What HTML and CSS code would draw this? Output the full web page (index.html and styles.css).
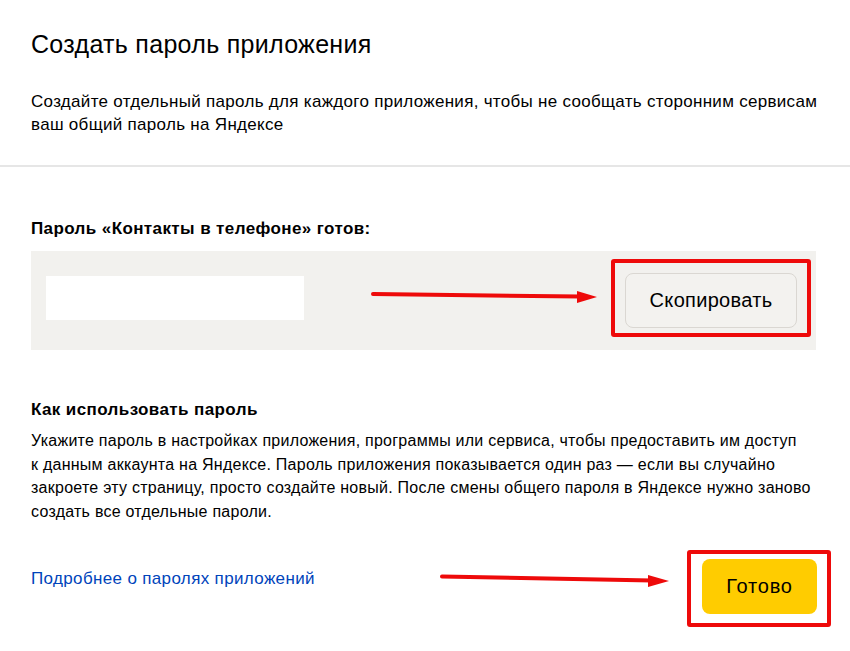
FILE: index.html
```html
<!DOCTYPE html>
<html lang="ru">
<head>
<meta charset="utf-8">
<title>Создать пароль приложения</title>
<link rel="stylesheet" href="styles.css">
</head>
<body>
<div class="page">
  <header class="head">
    <h1 class="title">Создать пароль приложения</h1>
    <p class="lead">Создайте отдельный пароль для каждого приложения, чтобы не сообщать сторонним сервисам<br>ваш общий пароль на Яндексе</p>
  </header>
  <section class="content">
    <h2 class="subtitle">Пароль «Контакты в телефоне» готов:</h2>
    <div class="pwbox">
      <div class="pwfield"></div>
      <button class="btn btn-copy" type="button">Скопировать</button>
    </div>
    <h2 class="subtitle how">Как использовать пароль</h2>
    <p class="info">Укажите пароль в настройках приложения, программы или сервиса, чтобы предоставить им доступ<br>к данным аккаунта на Яндексе. Пароль приложения показывается один раз — если вы случайно<br>закроете эту страницу, просто создайте новый. После смены общего пароля в Яндексе нужно заново<br>создать все отдельные пароли.</p>
    <div class="footer">
      <a class="more" href="#">Подробнее о паролях приложений</a>
      <button class="btn btn-done" type="button">Готово</button>
    </div>
  </section>
  <svg class="annot" width="850" height="651" viewBox="0 0 850 651" aria-hidden="true">
    <rect x="613" y="261" width="196" height="74" fill="none" stroke="#ee0a0a" stroke-width="4" rx="1"/>
    <rect x="689" y="552" width="140" height="73" fill="none" stroke="#ee0a0a" stroke-width="4" rx="1"/>
    <line x1="373" y1="294" x2="580" y2="296.6" stroke="#ee0a0a" stroke-width="4" stroke-linecap="round"/>
    <polygon points="577,291 597,297 577,303" fill="#ee0a0a"/>
    <line x1="442" y1="576.5" x2="652" y2="580.6" stroke="#ee0a0a" stroke-width="4" stroke-linecap="round"/>
    <polygon points="648,575 669,581 648,587" fill="#ee0a0a"/>
  </svg>
</div>
</body>
</html>
```
FILE: styles.css
```css
* { box-sizing: border-box; }
html, body { margin: 0; padding: 0; background: #fff; }
body {
  font-family: "Liberation Sans", Arial, sans-serif;
  color: #000;
  width: 850px;
  height: 651px;
  overflow: hidden;
}
.page { position: relative; width: 850px; height: 651px; }
.head {
  padding: 30px 34px 29px 31px;
  border-bottom: 2px solid #e6e6e6;
}
.title {
  margin: 0;
  font-size: 25px;
  line-height: 28px;
  font-weight: 400;
  letter-spacing: 0.3px;
}
.lead {
  margin: 32px 0 0;
  font-size: 17px;
  line-height: 23px;
  letter-spacing: 0.3px;
  white-space: nowrap;
}
.content { padding: 0 34px 0 31px; }
.subtitle {
  margin: 51px 0 11px;
  font-size: 17px;
  line-height: 22px;
  font-weight: 700;
  letter-spacing: 0.4px;
}
.pwbox {
  height: 99px;
  background: #f2f1ee;
  display: flex;
  align-items: center;
  justify-content: space-between;
  padding: 0 19px 0 15px;
}
.pwfield {
  width: 258px;
  height: 44px;
  background: #fff;
  margin-bottom: 6px;
}
.btn {
  font-family: inherit;
  color: #000;
  border-radius: 8px;
  cursor: pointer;
}
.btn-copy {
  width: 172px;
  height: 55px;
  background: #f3f2ef;
  border: 1px solid #dad7d2;
  font-size: 20px;
  letter-spacing: 0.3px;
}
.how { margin-top: 49px; margin-bottom: 8px; }
.info {
  margin: 0;
  font-size: 16px;
  line-height: 23.7px;
  letter-spacing: 0.25px;
  white-space: nowrap;
}
.footer {
  margin-top: 35px;
  display: flex;
  justify-content: space-between;
  align-items: flex-start;
}
.more {
  margin-top: 8px;
  font-size: 17px;
  line-height: 23px;
  letter-spacing: 0.35px;
  color: #0044bb;
  text-decoration: none;
}
.btn-done {
  width: 115px;
  height: 55px;
  background: #ffcc00;
  border: 0;
  font-size: 20px;
  letter-spacing: 0.8px;
  margin-right: -1px;
}
.annot { position: absolute; left: 0; top: 0; pointer-events: none; }
```
